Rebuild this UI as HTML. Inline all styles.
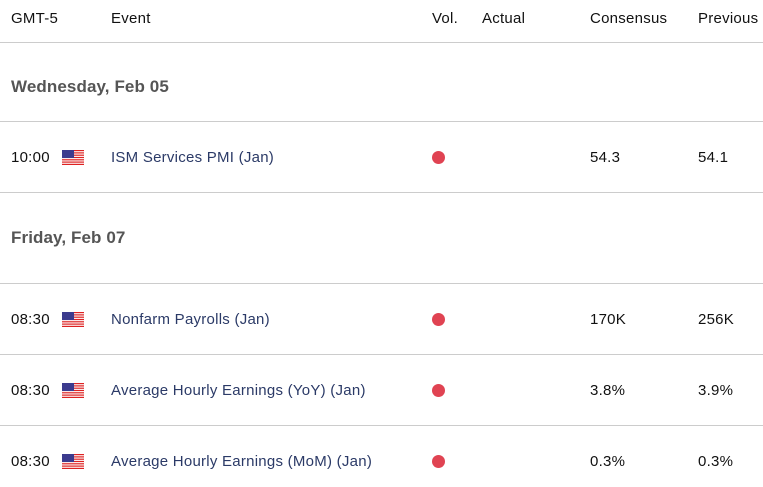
<!DOCTYPE html><html><head><style>
body{margin:0;width:763px;height:487px;background:#fff;font-family:"Liberation Sans",sans-serif;position:relative;overflow:hidden}
.t{position:absolute;font-size:15px;letter-spacing:0.25px;color:#111;white-space:nowrap;line-height:16px}
.ev{color:#2b3a67}
.d{position:absolute;font-size:17px;font-weight:bold;color:#555;line-height:18px;letter-spacing:0.1px}
.l{position:absolute;left:0;width:763px;height:1px;background:#ccc}
.dot{position:absolute;left:432px;width:13px;height:13px;border-radius:50%;background:#e04352}
.f{position:absolute;left:62px;width:22px;height:15px}
</style></head><body>
<div class="t" style="left:11px;top:11px">GMT-5</div>
<div class="t" style="left:111px;top:11px">Event</div>
<div class="t" style="left:432px;top:11px">Vol.</div>
<div class="t" style="left:482px;top:11px">Actual</div>
<div class="t" style="left:590px;top:11px">Consensus</div>
<div class="t" style="left:698px;top:11px">Previous</div>
<div class="l" style="top:42px"></div>
<div class="d" style="left:11px;top:78px">Wednesday, Feb 05</div>
<div class="l" style="top:121px"></div>
<div class="l" style="top:192px"></div>
<div class="d" style="left:11px;top:229px">Friday, Feb 07</div>
<div class="l" style="top:283px"></div>
<div class="l" style="top:354px"></div>
<div class="l" style="top:425px"></div>
<svg width="0" height="0" style="position:absolute"><defs><g id="us"><rect width="22" height="15" fill="#fff"/><rect y="0" width="22" height="1.2" fill="#d22"/><rect y="2.3" width="22" height="1.2" fill="#d22"/><rect y="4.6" width="22" height="1.2" fill="#d22"/><rect y="6.9" width="22" height="1.2" fill="#d22"/><rect y="9.2" width="22" height="1.2" fill="#d22"/><rect y="11.5" width="22" height="1.2" fill="#d22"/><rect y="13.8" width="22" height="1.2" fill="#d22"/><rect width="12" height="8" fill="#3c3b8e"/></g></defs></svg>
<div class="t" style="left:11px;top:150px">10:00</div><svg class="f" style="top:150px"><use href="#us"/></svg><div class="t ev" style="left:111px;top:150px">ISM Services PMI (Jan)</div><div class="dot" style="top:151px"></div><div class="t" style="left:590px;top:150px">54.3</div><div class="t" style="left:698px;top:150px">54.1</div>
<div class="t" style="left:11px;top:312px">08:30</div><svg class="f" style="top:312px"><use href="#us"/></svg><div class="t ev" style="left:111px;top:312px">Nonfarm Payrolls (Jan)</div><div class="dot" style="top:313px"></div><div class="t" style="left:590px;top:312px">170K</div><div class="t" style="left:698px;top:312px">256K</div>
<div class="t" style="left:11px;top:383px">08:30</div><svg class="f" style="top:383px"><use href="#us"/></svg><div class="t ev" style="left:111px;top:383px">Average Hourly Earnings (YoY) (Jan)</div><div class="dot" style="top:384px"></div><div class="t" style="left:590px;top:383px">3.8%</div><div class="t" style="left:698px;top:383px">3.9%</div>
<div class="t" style="left:11px;top:454px">08:30</div><svg class="f" style="top:454px"><use href="#us"/></svg><div class="t ev" style="left:111px;top:454px">Average Hourly Earnings (MoM) (Jan)</div><div class="dot" style="top:455px"></div><div class="t" style="left:590px;top:454px">0.3%</div><div class="t" style="left:698px;top:454px">0.3%</div>
</body></html>
